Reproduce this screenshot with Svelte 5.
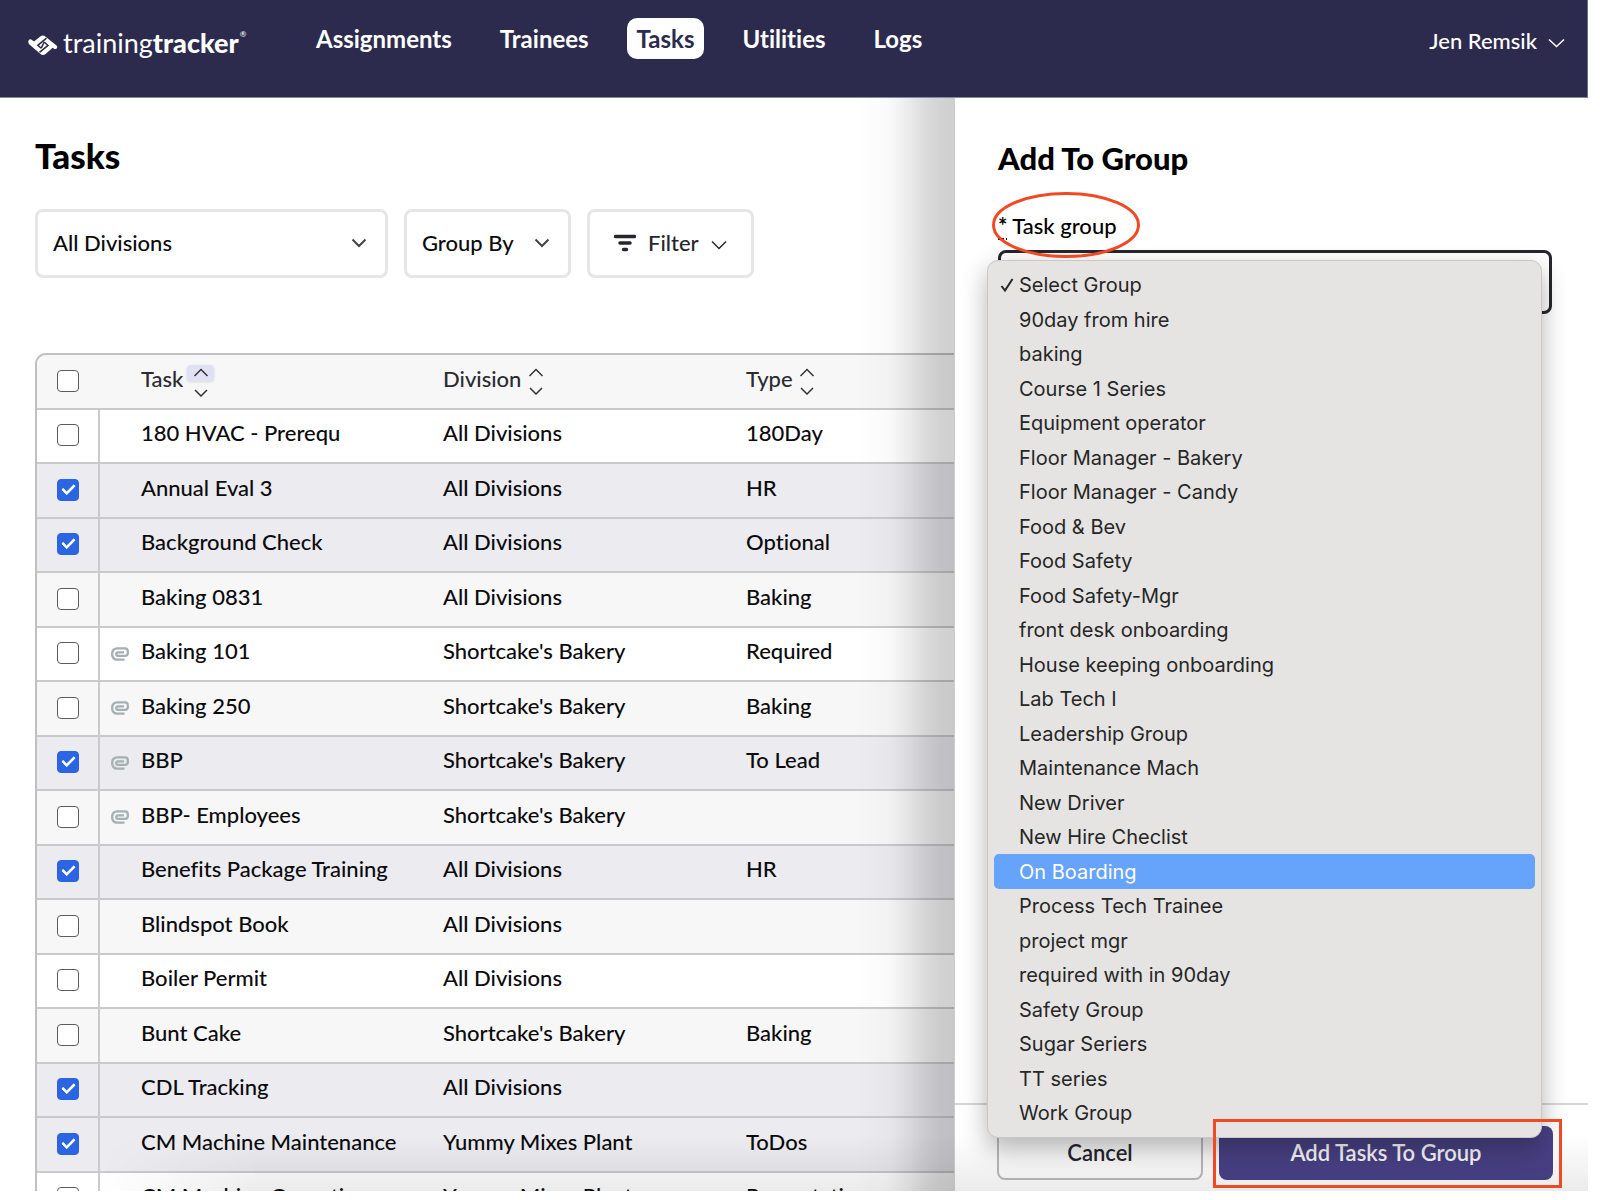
<script>
  const nav = ['Assignments', 'Trainees', 'Tasks', 'Utilities', 'Logs'];

  const A = 'All Divisions';
  const S = "Shortcake's Bakery";
  const Y = 'Yummy Mixes Plant';
  let rows = $state([
    { task: '180 HVAC - Prerequ', division: A, type: '180Day', checked: false },
    { task: 'Annual Eval 3', division: A, type: 'HR', checked: true },
    { task: 'Background Check', division: A, type: 'Optional', checked: true },
    { task: 'Baking 0831', division: A, type: 'Baking', checked: false },
    { task: 'Baking 101', division: S, type: 'Required', checked: false, clip: true },
    { task: 'Baking 250', division: S, type: 'Baking', checked: false, clip: true },
    { task: 'BBP', division: S, type: 'To Lead', checked: true, clip: true },
    { task: 'BBP- Employees', division: S, type: '', checked: false, clip: true },
    { task: 'Benefits Package Training', division: A, type: 'HR', checked: true },
    { task: 'Blindspot Book', division: A, type: '', checked: false },
    { task: 'Boiler Permit', division: A, type: '', checked: false },
    { task: 'Bunt Cake', division: S, type: 'Baking', checked: false },
    { task: 'CDL Tracking', division: A, type: '', checked: true },
    { task: 'CM Machine Maintenance', division: Y, type: 'ToDos', checked: true },
    { task: 'CM Machine Operation', division: Y, type: 'Presentation', checked: false }
  ]);

  const groups = [
    'Select Group', '90day from hire', 'baking', 'Course 1 Series', 'Equipment operator',
    'Floor Manager - Bakery', 'Floor Manager - Candy', 'Food & Bev', 'Food Safety',
    'Food Safety-Mgr', 'front desk onboarding', 'House keeping onboarding', 'Lab Tech I',
    'Leadership Group', 'Maintenance Mach', 'New Driver', 'New Hire Checlist', 'On Boarding',
    'Process Tech Trainee', 'project mgr', 'required with in 90day', 'Safety Group',
    'Sugar Seriers', 'TT series', 'Work Group'
  ];
  let group = $state('Select Group');
  let active = $state('On Boarding');
</script>

{#snippet sorter(on)}
  <span class="sorter">
    <span class="up" class:on>
      <svg width="16" height="9" viewBox="0 0 16 9"><path d="M1.500 8 8 1.500 14.500 8" /></svg>
    </span>
    <svg width="14" height="8" viewBox="0 0 14 8"><path d="M1 1 7 7 13 1" /></svg>
  </span>
{/snippet}

<div class="app">
  <header>
    <a class="logo" href="#home">
      <svg width="30" height="21" viewBox="0 0 30 21" aria-hidden="true">
        <path fill="#fff" d="M.7 5.200C1.600 4 3 4.100 4.300 5.300L6 6.600 12.300 1.400C14 .2 15.700.2 17.300 1.400L28.500 10.600C29.600 11.700 29.300 13.200 28.200 13.800 27 14.400 25.900 13.600 24.700 12.700L17.500 18.900C15.800 20.300 14.100 20.200 12.500 19L1.400 9.400C.2 8.400-.1 6.500.7 5.200Z" />
        <path fill="none" stroke="#2d2b4d" stroke-width="1.500" d="M18.500 3.200 9.800 10.300 13.200 13.200M16.200 7 20 10.400 11.500 17.400M16.200 7 13.200 13.200" />
      </svg>
      <span class="word">training<b>tracker</b></span><sup>®</sup>
    </a>
    <nav>
      {#each nav as item}
        <a href="#{item}" class:current={item === 'Tasks'}>{item}</a>
      {/each}
    </nav>
    <button class="user">
      Jen Remsik
      <svg width="17" height="10" viewBox="0 0 17 10"><path d="M1 1.500 8.500 8.500 16 1.500" /></svg>
    </button>
  </header>

  <div class="body">
    <main>
      <h1>Tasks</h1>
      <div class="filters">
        <div class="pick wide">
          <select aria-label="Division"><option>All Divisions</option></select>
          <svg width="16" height="10" viewBox="0 0 16 10"><path d="M1.500 1.500 8 8 14.500 1.500" /></svg>
        </div>
        <div class="pick">
          <select aria-label="Group by"><option>Group By</option></select>
          <svg width="16" height="10" viewBox="0 0 16 10"><path d="M1.500 1.500 8 8 14.500 1.500" /></svg>
        </div>
        <button class="filter">
          <svg class="bars" width="22" height="18" viewBox="0 0 22 18"><path d="M1.500 2.500h19M6 9h10M9.500 15.500h3" /></svg>
          Filter
          <svg class="thin" width="16" height="10" viewBox="0 0 16 10"><path d="M1 1.500 8 8.500 15 1.500" /></svg>
        </button>
      </div>

      <div class="tablewrap">
        <table>
          <colgroup><col class="c1" /><col class="c2" /><col class="c3" /><col /></colgroup>
          <thead>
            <tr>
              <th class="tick"><input type="checkbox" aria-label="Select all tasks" /></th>
              <th class="task"><span class="head">Task {@render sorter(true)}</span></th>
              <th><span class="head gap">Division {@render sorter(false)}</span></th>
              <th><span class="head gap">Type {@render sorter(false)}</span></th>
            </tr>
          </thead>
          <tbody>
            {#each rows as row}
              <tr class:sel={row.checked}>
                <td class="tick"><input type="checkbox" aria-label={row.task} bind:checked={row.checked} /></td>
                <td class="task">
                  <span class="name">
                    <span class="clip">
                      {#if row.clip}
                        <svg width="18" height="14" viewBox="0 0 18 14"><path d="M13.500 12.600H6A4.800 4.800 0 0 1 1.200 7.500V6.500A4.800 4.800 0 0 1 6 1.400H14A2.800 2.800 0 0 1 16.800 4.200V6A2.800 2.800 0 0 1 14 8.800H7A1.600 1.600 0 0 1 7 5.300H13" /></svg>
                      {/if}
                    </span>
                    {row.task}
                  </span>
                </td>
                <td>{row.division}</td>
                <td>{row.type}</td>
              </tr>
            {/each}
          </tbody>
        </table>
      </div>
      <div class="edge"></div>
    </main>

    <aside>
      <div class="form">
        <h2>Add To Group</h2>
        <div class="label">
          <label for="group"><abbr title="required">*</abbr> Task group</label>
          <svg class="ring" viewBox="0 0 148 66" preserveAspectRatio="none"><ellipse cx="74" cy="33" rx="72.500" ry="31.500" /></svg>
        </div>
        <div class="field">
          <select id="group" bind:value={group}>
            {#each groups as g}<option>{g}</option>{/each}
          </select>
          <div class="menu" role="listbox" aria-label="Task group">
            {#each groups as g}
              <button role="option" aria-selected={g === group} class:active={g === active}
                onmouseenter={() => (active = g)} onclick={() => (group = g)}>
                <span class="mark">
                  {#if g === group}
                    <svg width="14" height="16" viewBox="0 0 14 16"><path d="M1.500 9 5 13.500 12.500 2" /></svg>
                  {/if}
                </span>{g}
              </button>
            {/each}
          </div>
        </div>
      </div>
      <footer>
        <button class="cancel">Cancel</button>
        <div class="primary">
          <button>Add Tasks To Group</button>
          <span class="box"></span>
        </div>
      </footer>
    </aside>
    <div class="fade"></div>
  </div>
</div>

<style>
  :global(body) {
    background: #fff;
  }
  .app {
    height: calc(100vh - 9px);
    margin-right: 12px;
    display: flex;
    flex-direction: column;
    overflow: hidden;
    font-family: Lato, 'Open Sans', sans-serif;
    font-size: 22px;
    font-weight: 500;
    font-variant-ligatures: none;
    line-height: 28px;
    color: #0b0b0d;
  }
  .app * {
    box-sizing: border-box;
  }
  button,
  select {
    font: inherit;
    color: inherit;
    background: none;
    border: 0;
    padding: 0;
    margin: 0;
  }
  select {
    appearance: none;
  }
  svg {
    display: block;
    flex: none;
  }
  a {
    color: inherit;
    text-decoration: none;
  }

  header {
    flex: none;
    height: 98px;
    display: flex;
    align-items: flex-start;
    padding: 18px 22px 0 28px;
    background: #2d2b4d;
    color: #fff;
    border-bottom: 1px solid #8a889c;
    border-right: 1px solid #6f6d86;
  }
  .logo {
    width: 278px;
    display: flex;
    align-items: center;
    padding-top: 8px;
  }
  .logo svg {
    margin-top: 4px;
  }
  .word {
    margin-left: 5px;
    font-size: 27px;
    line-height: 34px;
    font-weight: 400;
  }
  .word b {
    font-weight: 900;
  }
  sup {
    align-self: flex-start;
    font-size: 8px;
    line-height: 16px;
    margin-left: 1px;
  }
  nav {
    display: flex;
    gap: 28px;
  }
  nav a {
    padding: 0 10px;
    line-height: 41px;
    font-size: 24px;
    font-weight: 700;
    border-radius: 10px;
  }
  nav .current {
    background: #fff;
    color: #2d2b4d;
  }
  .user {
    margin-left: auto;
    padding-top: 9px;
    display: flex;
    align-items: center;
    gap: 11px;
  }
  .user svg {
    margin-top: 4px;
  }
  .user path,
  .thin path {
    fill: none;
    stroke: #fff;
    stroke-width: 1.500;
  }

  .body {
    position: relative;
    flex: 1;
    min-height: 0;
    display: grid;
    grid-template-columns: minmax(0, 1fr) 634px;
  }
  main {
    position: relative;
    overflow: hidden;
    padding: 36px 0 0 35px;
  }
  h1,
  h2 {
    margin: 0;
    font-weight: 900;
    color: #000;
  }
  h1 {
    font-size: 35px;
    line-height: 42px;
  }
  .filters {
    display: flex;
    gap: 16px;
    margin-top: 33px;
  }
  .pick,
  .filter {
    height: 69px;
    border: 3px solid #e6e6e6;
    border-radius: 8px;
  }
  .pick {
    position: relative;
    width: 167px;
  }
  .pick.wide {
    width: 353px;
  }
  .pick select {
    width: 100%;
    height: 100%;
    padding: 0 15px 2px;
  }
  .pick svg {
    position: absolute;
    right: 18px;
    top: 26px;
    pointer-events: none;
  }
  .pick path {
    fill: none;
    stroke: #444;
    stroke-width: 2;
  }
  .filter {
    width: 167px;
    display: flex;
    align-items: center;
    padding: 0 0 2px 24px;
    gap: 12px;
    color: #26262c;
  }
  .bars path {
    stroke: #26262c;
    stroke-width: 3.500;
    stroke-linecap: round;
  }
  .thin {
    margin-top: 5px;
  }
  .thin path {
    stroke: #26262c;
  }

  .tablewrap {
    width: 1200px;
    margin-top: 75px;
    border: 2px solid #c0c0c1;
    border-radius: 11px 11px 0 0;
    overflow: hidden;
  }
  table {
    width: 100%;
    table-layout: fixed;
    border-collapse: separate;
    border-spacing: 0;
  }
  .c1 {
    width: 63px;
  }
  .c2 {
    width: 343px;
  }
  .c3 {
    width: 303px;
  }
  th,
  td {
    height: 54px;
    padding: 0 0 6px;
    text-align: left;
    font-weight: 500;
    white-space: nowrap;
    border-bottom: 2px solid #cacaca;
  }
  tbody tr:nth-child(even) td {
    height: 55px;
  }
  th {
    height: 55px;
    background: #f7f7f7;
    color: #2b2b31;
  }
  tbody tr:nth-child(even) {
    background: #f7f7f7;
  }
  tbody tr.sel {
    background: #ebebf0;
  }
  .tick {
    padding: 0 0 2px 20px;
  }
  td.tick {
    border-right: 2px solid #cacaca;
  }
  .tick input {
    appearance: none;
    display: block;
    width: 22px;
    height: 22px;
    margin: 0;
    border: 1px solid #5c5c5c;
    border-radius: 4px;
    background: #fff;
  }
  .tick input:checked {
    border-color: #2b65e3;
    background: #2b65e3;
    display: grid;
    place-items: center;
  }
  .tick input:checked::before {
    content: '';
    box-sizing: border-box;
    width: 13px;
    height: 8px;
    margin: 0 0 4px;
    border: solid #fff;
    border-width: 0 0 3px 3px;
    border-radius: 1px;
    transform: rotate(-45deg);
  }
  td.task,
  th.task {
    padding-left: 0;
  }
  th.task {
    padding-left: 41px;
  }
  .head {
    display: flex;
    align-items: center;
    gap: 4px;
  }
  .head.gap {
    gap: 1px;
  }
  .sorter {
    width: 27px;
    display: flex;
    flex-direction: column;
    align-items: center;
    gap: 8px;
    padding-top: 4px;
  }
  .up {
    width: 27px;
    height: 16px;
    display: grid;
    place-items: center;
    border-radius: 4px;
  }
  .gap .up {
    height: 12px;
  }
  .up.on {
    background: #e1e1f6;
    box-shadow: 0 1px 3px #0002;
  }
  .sorter path {
    fill: none;
    stroke: #333;
    stroke-width: 1.500;
  }
  .name {
    display: flex;
    align-items: center;
  }
  .clip {
    width: 41px;
    padding: 5px 0 0 11px;
  }
  .clip path {
    fill: none;
    stroke: #a5b0b1;
    stroke-width: 2.300;
  }
  .edge {
    position: absolute;
    inset: 0 0 0 auto;
    width: 100px;
    pointer-events: none;
    background: linear-gradient(90deg, #0000, #00000005 35%, #00000014 55%, #00000024 72%, #0000002c 85%, #00000030);
  }

  aside {
    display: flex;
    flex-direction: column;
    background: #fff;
    border-left: 1px solid #ccc;
    min-height: 0;
  }
  .form {
    flex: 1;
    padding: 42px 36px 0 43px;
  }
  h2 {
    font-size: 31px;
    line-height: 36px;
  }
  .label {
    position: relative;
    width: max-content;
    margin-top: 36px;
    color: #000;
  }
  abbr {
    font-weight: 700;
    text-decoration: underline dotted;
    text-underline-offset: 4px;
  }
  .ring {
    position: absolute;
    z-index: 3;
    left: -6px;
    top: -20px;
    width: 148px;
    height: 66px;
    overflow: visible;
    pointer-events: none;
  }
  .ring ellipse {
    fill: none;
    stroke: #ef4a24;
    stroke-width: 3;
  }
  .field {
    position: relative;
    margin-top: 10px;
  }
  .field select {
    display: block;
    width: 100%;
    height: 64px;
    padding: 0 16px;
    border: 3px solid #26262c;
    border-radius: 8px;
  }
  .menu {
    position: absolute;
    z-index: 2;
    top: 10px;
    left: -11px;
    right: 10px;
    padding: 7px 6px;
    background: #e5e4e2;
    border: 1px solid #c9c8c6;
    border-radius: 11px;
    box-shadow: 0 10px 26px #0000004d;
    font-family: Inter, 'Liberation Sans', sans-serif;
    font-weight: 400;
    font-size: 20px;
    color: #262626;
  }
  .menu button {
    display: flex;
    align-items: center;
    width: 100%;
    height: 34px;
    border-radius: 5px;
    text-align: left;
  }
  .menu button:nth-child(even) {
    height: 35px;
  }
  .menu .active {
    background: #66a3fb;
    color: #fff;
  }
  .mark {
    width: 25px;
    padding-left: 6px;
  }
  .mark path {
    fill: none;
    stroke: #262626;
    stroke-width: 2;
  }
  footer {
    flex: none;
    display: flex;
    gap: 16px;
    padding: 21px 35px 11px 42px;
    border-top: 2px solid #d6d6d6;
    background: #fff;
  }
  footer button {
    height: 54px;
    width: 100%;
    border-radius: 8px;
    font-weight: 600;
  }
  footer .cancel {
    flex: 0 0 206px;
    width: 206px;
    border: 2px solid #bcbcbc;
    color: #26262c;
  }
  .primary {
    position: relative;
    flex: 1;
  }
  .primary button {
    background: #4a4287;
    color: #fff;
  }
  .box {
    position: absolute;
    z-index: 3;
    inset: -7px -9px -8px -6px;
    border: 3px solid #ef4a24;
    pointer-events: none;
  }
  .fade {
    position: absolute;
    inset: auto 0 0 100px;
    height: 56px;
    pointer-events: none;
    background: linear-gradient(#0000, #00000014);
    mask-image: linear-gradient(90deg, #0000, #000 160px);
  }
</style>
